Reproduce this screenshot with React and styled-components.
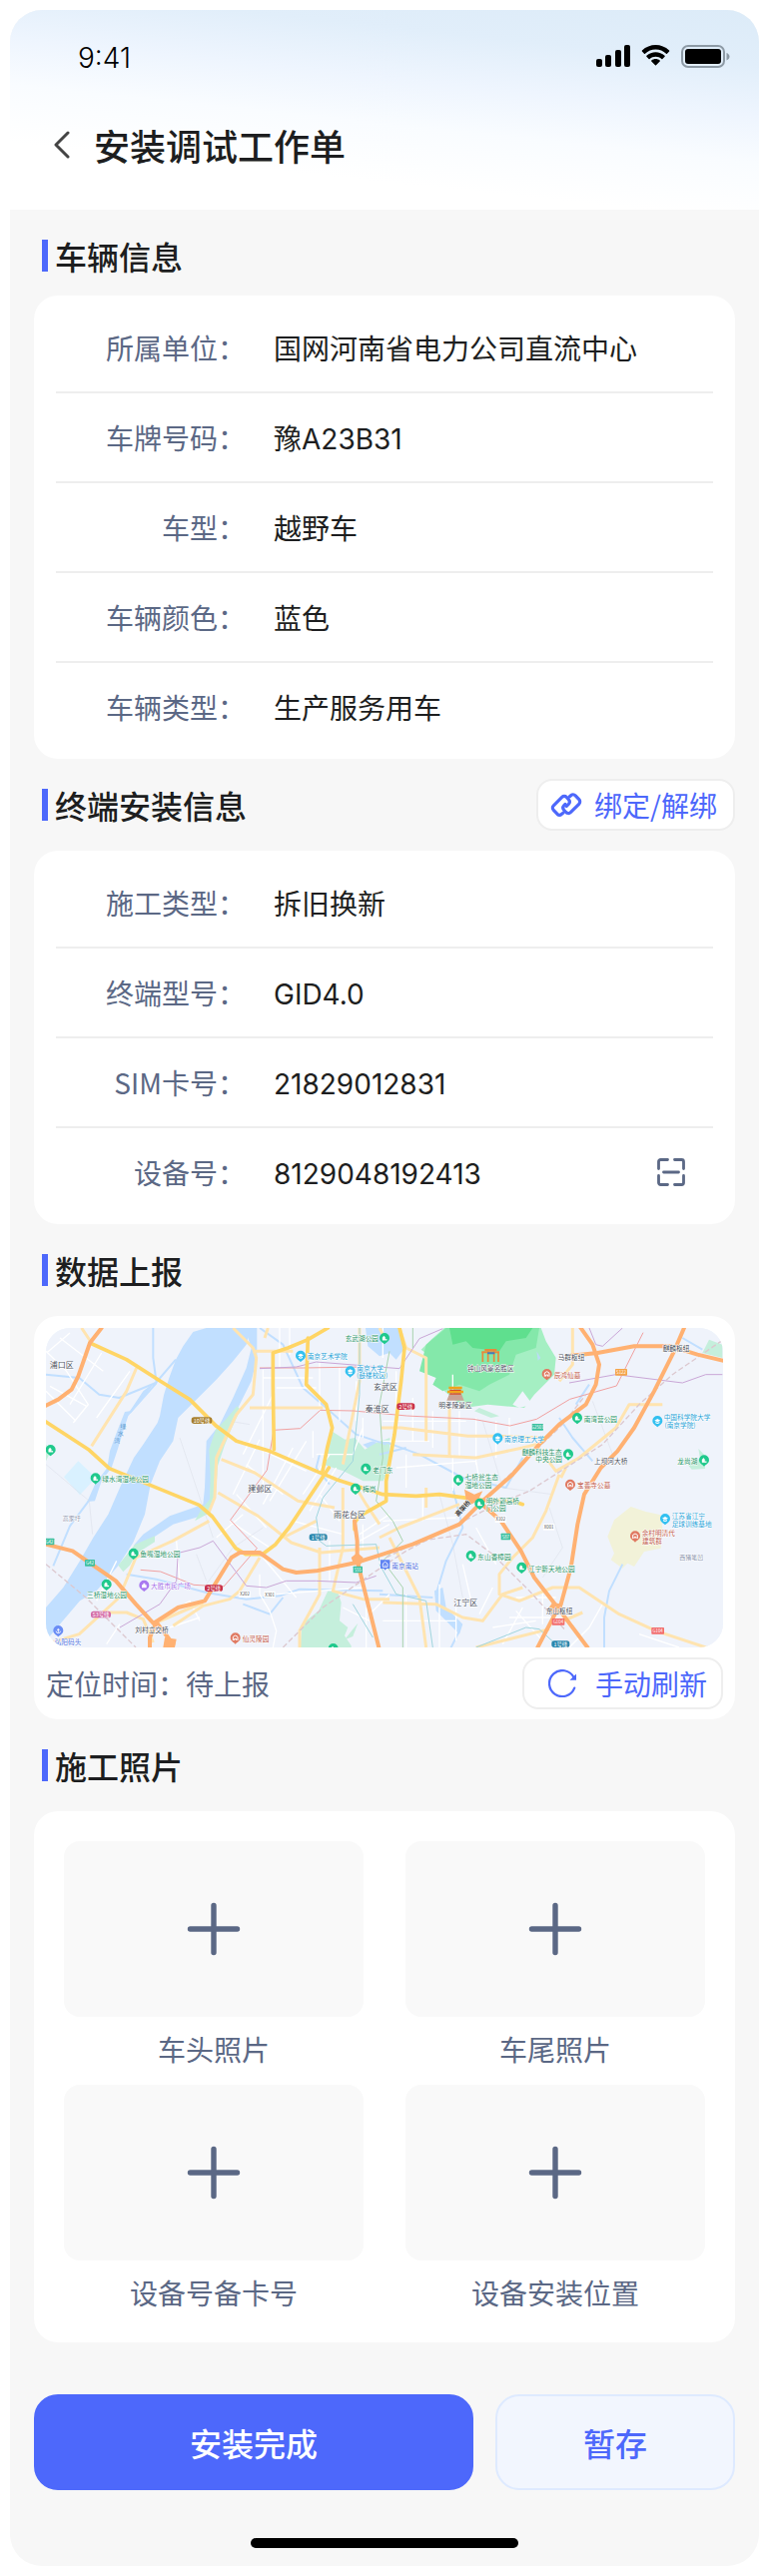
import React from "react";
import styled, { createGlobalStyle } from "styled-components";

const GlobalStyle = createGlobalStyle`
  * { box-sizing: border-box; }
  body {
    margin: 0;
    background: #fff;
    color: #1d1e20;
    font-family: "Noto Sans CJK SC", sans-serif;
    font-size: 28px;
    line-height: 40px;
  }
  h1, h2, dl, dt, dd, p { margin: 0; font-weight: 400; }
  button { font: inherit; color: inherit; padding: 0; border: 0; background: none; cursor: pointer; }
  svg { display: block; flex: none; }
`;

const Shell = styled.div`
  margin: 10px;
  border-radius: 32px;
  overflow: hidden;
  background: #f7f7f7;
`;

const Header = styled.header`
  height: 200px;
  background: linear-gradient(186deg, #dcebf8 0%, #e1eefa 20%, #eef5fe 38%, #f9fcff 55%, #fff 76%);
`;

const StatusBar = styled.div`
  display: flex;
  align-items: center;
  justify-content: space-between;
  height: 96px;
  padding: 0 29px 0 68px;
`;

const Clock = styled.time`
  font-family: Inter, sans-serif;
  font-size: 28px;
  font-weight: 300;
  color: #000;
`;

const StatusIcons = styled.div`
  display: flex;
  align-items: center;
  gap: 10px;
  padding-bottom: 4px;
`;

const NavBar = styled.nav`
  display: flex;
  align-items: center;
  gap: 24px;
  height: 78px;
  padding: 0 44px;
`;

const PageTitle = styled.h1`
  font-size: 36px;
  font-weight: 500;
  line-height: 48px;
`;

const Main = styled.main`
  padding: 0 24px;
`;

const SectionHead = styled.div`
  display: flex;
  align-items: center;
  justify-content: space-between;
  height: ${(p) => (p.$first ? "86px" : "92px")};
  padding-top: ${(p) => (p.$first ? "6px" : "0")};
`;

const SectionTitle = styled.h2`
  margin-left: 8px;
  padding-left: 7px;
  border-left: 6px solid #4d68fb;
  font-size: 32px;
  font-weight: 500;
  line-height: 32px;
`;

const Card = styled.div`
  border-radius: 24px;
  background: #fff;
  padding: ${(p) => p.$pad};
`;

const Row = styled.div`
  display: flex;
  align-items: center;
  height: 90px;
  border-bottom: 2px solid #eee;
  &:last-child { height: 88px; border-bottom: 0; }
`;

const RowLabel = styled.dt`
  width: 190px;
  margin-right: 28px;
  text-align: right;
  color: #5b6885;
`;

const RowValue = styled.dd`
  flex: 1;
`;

const ValueText = styled.span`
  font-family: Inter, "Noto Sans CJK SC", sans-serif;
  line-height: 1;
`;

const ScanButton = styled.button`
  margin-right: 28px;
  color: #5b6885;
`;

const PillButton = styled.button`
  display: flex;
  align-items: center;
  height: 52px;
  gap: ${(p) => p.$gap};
  padding: ${(p) => p.$pad};
  border: 2px solid #eee;
  border-radius: 16px;
  background: #fff;
  color: #4d68fb;
`;

const MapView = styled.svg`
  width: 100%;
  height: 320px;
  border-radius: 24px;
  background: #eff3fb;
`;

const MapFoot = styled.div`
  display: flex;
  align-items: center;
  justify-content: space-between;
  margin-top: 10px;
  color: #5b6885;
`;

const PhotoGrid = styled.div`
  display: grid;
  grid-template-columns: 1fr 1fr;
  column-gap: 42px;
  row-gap: 16px;
`;

const PhotoItem = styled.div`
  display: flex;
  flex-direction: column;
  gap: 12px;
  text-align: center;
  color: #5b6885;
`;

const PhotoAdd = styled.button`
  display: flex;
  align-items: center;
  justify-content: center;
  height: 176px;
  border-radius: 16px;
  background: #f9f9f9;
`;

const Actions = styled.footer`
  display: grid;
  grid-template-columns: 11fr 6fr;
  gap: 22px;
  padding: 52px 24px 48px;
`;

const ActionButton = styled.button`
  height: 96px;
  border-radius: 24px;
  border: 2px solid ${(p) => (p.$primary ? "#4d68fb" : "#deeaff")};
  background: ${(p) => (p.$primary ? "#4d68fb" : "#f2f6fe")};
  color: ${(p) => (p.$primary ? "#fff" : "#4d68fb")};
  font-size: 32px;
  font-weight: 500;
`;

const HomeIndicator = styled.div`
  width: 268px;
  height: 10px;
  margin: 0 auto 18px;
  border-radius: 5px;
  background: #000;
`;

/* ---------- icons ---------- */

const SignalIcon = () => (
  <svg width="34" height="22" viewBox="0 0 34 22" aria-hidden="true">
    <rect x="0" y="14" width="6" height="8" rx="2" />
    <rect x="9" y="10" width="6" height="12" rx="2" />
    <rect x="19" y="5" width="6" height="17" rx="2" />
    <rect x="28" y="0" width="6" height="22" rx="2" />
  </svg>
);

const WifiIcon = () => (
  <svg width="31" height="22" viewBox="0 0 31 22" aria-hidden="true">
    <path d="M15.5 4.5c4 0 7.700 1.500 10.500 4.200.3.300.7.300 1 0l2.100-2.200c.3-.3.300-.8 0-1.100C25.300 1.900 20.500 0 15.500 0S5.700 1.900 1.900 5.400c-.3.300-.3.800 0 1.100L4 8.700c.3.300.7.300 1 0 2.800-2.700 6.500-4.200 10.500-4.200z" />
    <path d="M15.500 11.700c2.200 0 4.300.8 5.900 2.300.3.300.7.300 1 0l2.200-2.200c.3-.3.300-.8 0-1.100-5.100-4.700-13.100-4.700-18.200 0-.3.300-.3.800 0 1.100L8.600 14c.3.300.7.300 1 0 1.600-1.500 3.700-2.300 5.900-2.300z" />
    <path d="M19.700 16.500c.3-.3.300-.8 0-1.100-2.400-2-6-2-8.400 0-.3.300-.3.800 0 1.100l3.700 3.800c.3.300.7.300 1 0z" />
  </svg>
);

const BatteryIcon = () => (
  <svg width="49" height="23" viewBox="0 0 49 23" aria-hidden="true">
    <rect x="1" y="1" width="42" height="21" rx="6" fill="none" stroke="#8d9aa5" strokeWidth="2" />
    <rect x="4" y="4" width="36" height="15" rx="3" />
    <path d="M45.500 8v7.500c1.700-.6 3-2 3-3.700s-1.300-3.200-3-3.800z" fill="#8d9aa5" />
  </svg>
);

const BackIcon = () => (
  <svg width="16" height="28" viewBox="0 0 16 28" fill="none" stroke="#444" strokeWidth="3" strokeLinecap="round" strokeLinejoin="round" aria-hidden="true">
    <path d="M14 2 2 14l12 12" />
  </svg>
);

const LinkIcon = () => (
  <svg width="32" height="24" viewBox="0 0 32 24" fill="none" stroke="currentColor" strokeWidth="3.200" strokeLinecap="round" strokeLinejoin="round" aria-hidden="true">
    <path d="M12.800 20.300 11.500 21.300c-1.300 1.200-3.300 1.100-4.600-.1l-3.600-3.800c-1.300-1.300-1.300-3.300 0-4.600l8.400-8.400c1.300-1.300 3.300-1.300 4.600 0l2 2.300c1.300 1.400 1.200 3.400 0 4.700l-2 2" />
    <path d="M19.400 3.800 20.600 2.700c1.300-1.200 3.300-1.200 4.600.1l3.600 3.900c1.200 1.300 1.200 3.300-.1 4.600l-8.400 8.300c-1.300 1.300-3.300 1.200-4.600-.1l-2-2.200c-1.200-1.400-1.200-3.400.1-4.700l1.200-1.200" />
  </svg>
);

const ScanIcon = () => (
  <svg width="28" height="28" viewBox="0 0 28 28" fill="none" stroke="currentColor" strokeWidth="2.800" strokeLinecap="round" strokeLinejoin="round" aria-hidden="true">
    <path d="M1.500 10.500v-7a2 2 0 0 1 2-2h7M17.500 1.500h7a2 2 0 0 1 2 2v7M26.500 17.500v7a2 2 0 0 1-2 2h-7M10.500 26.500h-7a2 2 0 0 1-2-2v-7M6.500 14h15" />
  </svg>
);

const RefreshIcon = () => (
  <svg width="29" height="28" viewBox="0 0 29 28" fill="none" aria-hidden="true">
    <path d="M26.200 18.600A13 13 0 1 1 25.500 8" stroke="currentColor" strokeWidth="2.200" strokeLinecap="round" />
    <path d="M28 4.500v6.200h-6.500z" fill="currentColor" />
  </svg>
);

const PlusIcon = () => (
  <svg width="54" height="54" viewBox="0 0 54 54" stroke="#5b6885" strokeWidth="5.400" strokeLinecap="round" aria-hidden="true">
    <path d="M27 3.500v47M3.500 27h47" />
  </svg>
);

/* ---------- map ---------- */

const EAST = 1050;

const minorRoads = [
  "M48 130 110 190 175 290 130 345M90 90l130 100M60 235l110 60M120 75l-70 60M215 135 120 290M300 190 200 330M48 250l90 90",
  "M700 185v350M735 250 640 440M650 470 760 560M640 400l190 90M690 395 610 560M620 560l90 100M830 400l-110 180M790 420 700 590M850 370v80M740 240h120M700 210h150M750 60v120M780 60v80M870 160v150M930 180v160M980 220v120M600 640l120 80M560 690l80-70M740 300h90",
  "M860 440h110l30-80M1000 330v60M820 560l80-120M790 640l150 40M900 700v120M990 700l90-50M1000 650v80M870 560l60 80M920 480l-80 130M1080 620l-90 60",
  "M690 800v60l30 50 20 60-10 50M740 860l260-20M440 700l10 120M260 760l-60 120M380 940l100-60 30 60M420 960l90-30M230 1010l40-60M700 750l100 120M1010 900v120M940 900l80 40M1080 860l-60 60",
  "M1060 60v90M1100 190v120M1060 340h250M1150 270v130M1210 310v110M1290 310v140M1340 330v140M1060 400h140M1100 480l240-20M1400 340v110M1130 440v100M1340 460l10 60M1440 330v80M1270 200v90",
  "M1060 640l220-10M1180 560v80M1270 440v110M1300 770l30 130M1340 660l60 110M1390 840l-40 80M1460 910l80 90M1480 900l-60 110M1540 850v100M1460 870h120M1440 930h170M1720 890l-40 70-60 60M1580 900l50 50M1830 980l120 40M1130 860v160M1230 830v190M1280 900v100M1060 940h220M1390 960l130-20",
];

const lightRoads = [
  "M155 60l30 45M320 180 290 250 185 415M48 1010l100-30 120-110 50-120 110-50 110-60",
  "M610 60l60 60 10 30-10 110-50 60-60 130-5 120-20 50",
  "M670 130h120M660 300h220M575 455l100 40 130 85 110 20M565 555l120 70 100 80 90 30 175-15",
  "M715 60l-10 30M990 60v160l-50 250M940 540v180l-30 130 90 25h80M870 720v140l-60 110v50M690 750l-60 100-30 25-80 20-90 60M380 945l140-60M230 915h60l50 20 30 70",
  "M1110 60l20 60 60 30v250M1055 360h60l200 25 90 0 150 5M1260 300v150M1150 440l190 10 140-30 40-10 60 80 70-40 110-90 40-70h100",
  "M1050 690 1110 660 1290 590M1590 500l-40 110-40 80-60 60-40 50v60l60 20 100-40h80l120 80 110 50 150 50 120 20M1480 840l-60 20-60 80-60-10-80-40-160-5M1080 690l90 180 20 150M1610 480l-15 30M1630 60v110l-40 50M1340 1020l220-55",
  "M1590 945l70-30M1050 60l10 20M980 540l30 50 40 60M760 690l100-50M1190 540v60",
];

const yellowRoads = [
  "M180 105l110 50 110 70 80 50 30 30 50 50 60 45 100 30 140 60 60 25 140 45 100 5 70-5 150 20h70l30 10",
  "M48 342l130 85 60 55 110 45 160 65 40 35 70 95 30 18h50l40-30 40-50 120-180",
  "M895 60l-60 35-60 25-45 15v100l3 190",
  "M835 90l-5 140 60 60 18 70-15 60-15 75",
  "M1110 60l15 60-10 100-20 160-25 140v60l-80 45-15 20v20",
];

const orangeRoads = [
  "M215 60l-35 45-35 100-20 40-40 30-37 18",
  "M48 710l80 20 50 35 80 55 60 70 55 60M375 945l70-45 80-20 80-130 25-15h60l70 50 40 10 60-5 120-25 80-25 90-30 140-60 70-70 90-80 80-90 60-60 80-60 30-60 10-60-20-60-60-85",
  "M975 640l8 60v60l30 120 35 140M360 1020v-30l20-45 50 65",
  "M1625 143l80-8 110-20h110l80 25 85 20M1965 60l-30 70-60 120-60 110-50 70-50 50-50 80-20 90-20 130-30 110",
  "M1335 570l80 70 60 90 40 80 70 90 90 120M1585 905l-60 115",
];

const blueStreams = [
  "M370 60v90l10 75M48 200l100 10 60 50 60 10 110-45 60-70M380 225l-80 90M180 575l-60 80-50 120",
  "M690 60l70 50 60 130 70 60 90 80 90 30",
  "M290 800l90 15 150 40 120 20 100-10 60-20 250 5M640 890l80 30 40-50",
  "M1270 540l30 120-50 100-30 100 20 60 50 50-30 60M1050 860l160 10M1480 450l-50 90-130-30-130-70-110-40M1590 330l40 60 60 70M1680 230l-40 60M1780 770l-40 80-15 80v90M1960 90l60 35",
  "M870 440l-10 40 40 50M1050 440l80-20",
];

const rails = [
  "M760 1020 880 900 1040 790 1130 730 1400 590 1500 550 1720 410 1830 290 1930 200 2076 100",
  "M1070 750l100-50 140-20 80 60 110 110 110 120",
  "M48 770l120 100 150 150",
  "M1400 540l200-190 70-90",
];

const metroLines = [
  ["#f0a0a0", "M690 180h130l180-3M332 787l60 5 100 40 90 5 100-115-80-85 110-150 20-120 80-5 60-55 100 2 160 15 200 10 110 20 80-20 100-60 140-40 80-160"],
  ["#c9a6d6", "M450 735l60-15 40-20 100 135 60 5 60-20h90l120 5 60-20M270 960l120-70 50-70 5-90M690 182l110-5 60-15 250 20 60-90 70-30M1680 60l20 50 20 5 60-55M1620 225l140-25 200 25 70-25h50"],
  ["#9fd5dd", "M990 60v200l-20 200-90 110-20 60 10 70 20 15 150-5 10 50M970 890l60 100M1050 770l50 90 90 20 20 140M1340 1020l150-60 40 5 60 55"],
  ["#a8d3ae", "M1080 130l-30 160 10 160-20 130 50 60 30 60-60 60 60 80v180M1150 60v60"],
];

const pins = [
  ["green", 62, 428], ["green", 197, 513], ["green", 311, 739], ["green", 230, 832], ["green", 978, 544],
  ["green", 1009, 484], ["green", 1065, 92], ["green", 911, 1025], ["cyan", 813, 145], ["cyan", 962, 192],
  ["violet", 343, 835], ["indigo", 85, 971], ["clay", 617, 993], ["clay", EAST + 503, 200], ["clay", EAST + 573, 532],
  ["clay", EAST + 768, 687], ["green", EAST + 594, 332], ["green", EAST + 567, 441], ["green", EAST + 975, 459],
  ["green", EAST + 237, 518], ["green", EAST + 301, 589], ["green", EAST + 275, 746], ["green", EAST + 427, 781],
  ["cyan", EAST + 355, 393], ["cyan", EAST + 835, 341], ["cyan", EAST + 858, 635],
];

const pinColors = { green: "#20c98c", cyan: "#33c0f0", violet: "#a878f0", indigo: "#6a8df5", clay: "#e07a62" };

const labels = [
  ["浦口区", 95, 181, "district"], ["玄武区", 1068, 247, "district"], ["秦淮区", 1043, 311, "district"],
  ["建邺区", 691, 552, "district"], ["雨花台区", 960, 630, "district"], ["江宁区", EAST + 259, 893, "district"],
  ["玄武湖公园", 997, 100, "green"], ["绿水湾湿地公园", 287, 522, "green"], ["鱼嘴湿地公园", 391, 747, "green"],
  ["三桥湿地公园", 231, 871, "green"], ["老门东", 1060, 494, "green"], ["梅岗", 1019, 552, "green"],
  ["南京艺术学院", 893, 153, "cyan"], ["南京大学", 1022, 188, "cyan"], ["(鼓楼校区)", 1028, 211, "cyan"],
  ["大胜市民广场", 423, 844, "violet"], ["弘阳码头", 114, 1010, "indigo"], ["仙灵陵园", 678, 1003, "clay"],
  ["刘村立交桥", 366, 975, "dark"], ["高家圩", 125, 640, "muted"],
  ["钟山风景名胜区", EAST + 334, 190, "dark"], ["明孝陵景区", EAST + 228, 301, "dark"],
  ["马群枢纽", EAST + 576, 155, "dark"], ["麒麟枢纽", EAST + 891, 130, "dark"], ["上坝河大桥", EAST + 695, 467, "dark"],
  ["东山枢纽", EAST + 540, 917, "dark"], ["辰鸿仙墓", EAST + 564, 209, "clay"], ["宝善寺公墓", EAST + 644, 541, "clay"],
  ["余村明清代", EAST + 838, 685, "clay"], ["建筑群", EAST + 819, 708, "clay"],
  ["南湾营公园", EAST + 664, 341, "green"], ["麒麟科技生态", EAST + 488, 440, "green"], ["中央公园", EAST + 509, 463, "green"],
  ["龙尚湖", EAST + 925, 468, "green"], ["七桥瓮生态", EAST + 307, 516, "green"], ["湿地公园", EAST + 297, 539, "green"],
  ["明外郭高桥", EAST + 370, 587, "green"], ["门公园", EAST + 350, 610, "green"], ["东山香樟园", EAST + 345, 755, "green"],
  ["江宁新天地公园", EAST + 517, 791, "green"], ["南京理工大学", EAST + 435, 402, "cyan"],
  ["中国科学院大学", EAST + 924, 337, "cyan"], ["(南京学院)", EAST + 903, 361, "cyan"],
  ["江苏省江宁", EAST + 928, 633, "cyan"], ["足球训练基地", EAST + 938, 656, "cyan"],
  ["南京南站", EAST + 77, 782, "indigo"], ["西猪笔凹", EAST + 937, 757, "muted"],
];

const labelColors = {
  district: "#4a4f5c", dark: "#4a4f5c", muted: "#8a93ad", green: "#1f9468", cyan: "#1e9fd8",
  violet: "#a56ee8", indigo: "#4d6fe0", clay: "#c2604f",
};

const badges = [
  ["10号线", 516, 338, 62, "#a8802f"], ["2号线", 552, 842, 54, "#c9304a"], ["1号线", 866, 689, 54, "#2a87ad"],
  ["S3号线", 213, 921, 60, "#d36aa6"], ["2号线", EAST + 79, 296, 54, "#c9304a"], ["1号线", EAST + 544, 1010, 54, "#2a87ad"],
  ["G42", 180, 766, 30, "#3cc0a0"], ["G42", 58, 702, 30, "#3cc0a0"], ["S55", 985, 786, 28, "#3cc0a0"],
  ["G2501", EAST + 475, 358, 34, "#3cc0a0"], ["S87", EAST + 379, 687, 28, "#3cc0a0"], ["S122", EAST + 726, 193, 36, "#f5a54a"],
  ["G104", EAST + 537, 943, 38, "#f26d6d"], ["G104", EAST + 836, 970, 38, "#f26d6d"],
];

const roadTags = [["X202", 645, 860], ["X301", 720, 861], ["X102", EAST + 364, 635], ["X001", EAST + 509, 658]];

const Pin = ({ kind, x, y }) => (
  <g transform={`translate(${x} ${y})`}>
    <path d="M0 17C-5 12-15 8-15-2a15 15 0 0 1 30 0C15 8 5 12 0 17z" fill={pinColors[kind]} />
    {kind === "green" && <path d="M-6 5V-3l4-5 4 4v6h5v3zM-2-1v5" fill="#fff" stroke="#fff" />}
    {kind === "cyan" && <path d="M-9-3 0-8l9 5-9 5zM-6 1v4q6 4 12 0V1L0 4z" fill="#fff" />}
    {kind === "violet" && <path d="M-7 6V-3h4v-5h6v5h4v9z" fill="#fff" />}
    {kind === "indigo" && <path d="M0-8V5M-4-4h8M-7 0q1 6 7 6t7-6" fill="none" stroke="#fff" strokeWidth="2.500" />}
    {kind === "clay" && <path d="M-7 6V-5l7-4 7 4V6M-3 6v-5h6v5" fill="none" stroke="#fff" strokeWidth="3" />}
  </g>
);

const LocationMap = () => (
  <MapView viewBox="48 60 2034 960" preserveAspectRatio="xMidYMid slice" role="img" aria-label="定位地图">
    <rect x="-500" y="0" width="3200" height="1100" fill="#eff3fb" />

    {/* water */}
    <g fill="#c1dfff">
      <path d="M530 60 490 72 460 115 438 155 418 210 402 262 390 325 383 345 340 410 312 450 270 540 235 620 190 690 150 760 100 840 48 900V1000L90 950 150 880 200 850 265 775 310 705 345 620 362 530 390 460 430 400 445 330 500 275 560 215 610 160 650 110 662 60H608L590 78 562 145 570 152 585 138 612 100 640 76 630 60z" />
      <path d="M645 60h37v90l-17 70-40 80-25 60-25 40-15 40-15 60-5 90-10 30-100 30-60 40-60 25 30-35 80-55 100-35 5-50 5-140 40-50 40-80 40-90 15-60z" />
      <path d="M375 222 340 250 300 310 285 312 262 370 240 430 232 480 195 530 172 582 195 580 215 520 245 480 265 420 280 370 295 325 345 265z" />
      <path d="M1008 60H1110l20 55-30 40-20-20-30 10-35-30z" />
      <path d="M1000 410l30-10 50 20-30 30z" />
      <path d="M1215 850l25-10 10 60 50 50-10 30-50-50-20-20z" />
    </g>
    <path d="M102 508 145 460 198 510 150 562z" fill="#d9f1ff" />

    {/* parks */}
    <g fill="#c5efdc">
      <path d="M622 295l10 10-28 60-20 50-20 60-6 90-18 50-45 25 20-35 25-30 2-70-4-80 20-60 30-30z" />
      <path d="M375 685v18l-55 35-20 35-20 20-15-20 50-62z" />
      <path d="M906 370l40 25 30-5 30 35 35-20 40-15v90l-20 40h-60l-60-30-60-20z" />
      <path d="M895 850l30 5 10 30-5 55 25 20-10 25 20 30v5H812l5-70 50-40z" />
      <path d="M48 410l15 20-15 30z" />
      <path d="M2008 423l20 20v40l-40 2-15-18 40-15z" />
      <path d="M2040 95l40 15v40l-60-15z" />
      <path d="M1350 300l60 25-25 5-50-20z" />
      <path d="M970 965l15-18-15 40-25 10z" />
    </g>
    <path d="M1805 597l45 15 45 10 5 40-5 60-50 10-30 45-20-10-15 15-35-25 10-20-20-50 20-50z" fill="#f2f2d8" />

    {/* Purple Mountain */}
    <path d="M1245 60H1535l15 40 30 50-5 50-60 60-30 40-110-10-70 10-60-50-20-40-25-10-5-60-20-15 30-30z" fill="#a5efc3" />
    <path d="M1250 60H1530l-10 60-60 20-20 60-60 30-30 20-60-20-50 20-30-20 10-20-50-20 20-80z" fill="#84e8aa" />
    <path d="M1260 60H1510l-20 30-60 10-20 30-80-10-20-20-40 10z" fill="#5fdf8e" />
    <path d="M1480 250l30 40-40 10-20-10z" fill="#eff3fb" />
    <path d="M1522 130l12 20-8 8z" fill="#b9dcf5" />

    <g fill="none" stroke="#c1dfff" strokeWidth="6" strokeLinejoin="round">
      {blueStreams.map((d) => <path key={d} d={d} />)}
    </g>
    <g fill="none" stroke="#fff" strokeWidth="4">
      {minorRoads.map((d) => <path key={d} d={d} />)}
    </g>
    <g fill="none" stroke="#d9dde6" strokeWidth="1.500">
      <path d="M48 470l130 110 10 100M450 390l100 300M530 830l80-110 90-60M600 340l60 10M1230 560l40 150 30 160M1360 340l60 200 150 20M1560 600l40 120-60 90M1690 280l60 160M500 740l30 80" />
    </g>
    <g fill="none" stroke="#ffe4b0" strokeWidth="9" strokeLinejoin="round">
      {lightRoads.map((d) => <path key={d} d={d} />)}
    </g>
    {metroLines.map(([color, d]) => <path key={d} d={d} fill="none" stroke={color} strokeWidth="3" />)}
    <g fill="none" stroke="#dcc8cf" strokeWidth="4">
      {rails.map((d) => <path key={d} d={d} strokeDasharray="16 8" />)}
    </g>
    <g fill="none" stroke="#ffd565" strokeWidth="11" strokeLinejoin="round" strokeLinecap="round">
      {yellowRoads.map((d) => <path key={d} d={d} />)}
    </g>
    <g fill="none" stroke="#ffb172" strokeWidth="12" strokeLinejoin="round" strokeLinecap="round">
      {orangeRoads.map((d) => <path key={d} d={d} />)}
    </g>
    <path d="M1305 545l30 15 25-10-15 30-20 10-15-15zM965 750l18-15 18 15-8 22h-20zM1570 885l30 5-5 30h-25l-15-15zM405 990l35 5-5 25h-35z" fill="#ffb172" />

    {/* scenic gate and pavilion */}
    <g>
      <path d="M1360 132v30M1376 126v36M1394 126v36M1407 132v30" stroke="#e8893a" strokeWidth="5" />
      <path d="M1357 133h53M1366 126h36" stroke="#e8893a" strokeWidth="6" />
      <path d="M1374 136h22" stroke="#3f7fc0" strokeWidth="6" />
      <path d="M1252 278l8-20h36l8 20z" fill="#c9a395" />
      <path d="M1258 240h40M1254 252h48" stroke="#f0a41c" strokeWidth="7" />
      <path d="M1261 247h34M1261 258h34" stroke="#d9502a" strokeWidth="4" />
    </g>

    {pins.map(([kind, x, y]) => <Pin key={`${x}-${y}`} kind={kind} x={x} y={y} />)}
    <g transform={`translate(${EAST + 17} 772)`}>
      <path d="M-14-15h28v26H4L0 16-4 11h-10z" fill="#5f83f2" />
      <path d="M-7 6V-4l7-5 7 5V6zM-2 2h4" fill="none" stroke="#fff" strokeWidth="2.500" />
    </g>

    <g textAnchor="middle" stroke="#fff" strokeWidth="3" strokeLinejoin="round" paintOrder="stroke">
      {labels.map(([text, x, y, kind]) => (
        <text key={text} x={x} y={y} fontSize={kind === "district" ? 24 : kind === "muted" ? 18 : 20} fill={labelColors[kind]}>{text}</text>
      ))}
      <text fontSize="18" fill="#5d9bd0" stroke="none">
        <tspan x="280" y="362">绿</tspan>
        <tspan x="272" y="384">水</tspan>
        <tspan x="262" y="406">湾</tspan>
      </text>
      <text x={EAST + 250} y="609" fontSize="19" fontWeight="700" fill="#3a3a3a" transform={`rotate(-48 ${EAST + 250} 602)`}>高架桥</text>
    </g>

    {badges.map(([text, x, y, w, fill]) => (
      <g key={`${text}-${x}`}>
        <rect x={x - w / 2} y={y - 10} width={w} height="20" rx={w > 50 ? 8 : 2} fill={fill} />
        <text x={x} y={y + 6} fontSize={w > 50 ? 16 : 13} textAnchor="middle" fill="#fff">{text}</text>
      </g>
    ))}
    {roadTags.map(([text, x, y]) => (
      <g key={text}>
        <rect x={x - 17} y={y - 10} width="34" height="20" fill="#fff" />
        <text x={x} y={y + 5} fontSize="13" textAnchor="middle" fill="#555">{text}</text>
      </g>
    ))}
  </MapView>
);

/* ---------- page ---------- */

const vehicleRows = [
  ["所属单位：", "国网河南省电力公司直流中心"],
  ["车牌号码：", "豫A23B31"],
  ["车型：", "越野车"],
  ["车辆颜色：", "蓝色"],
  ["车辆类型：", "生产服务用车"],
];

const terminalRows = [
  ["施工类型：", "拆旧换新"],
  ["终端型号：", "GID4.0"],
  ["SIM卡号：", "21829012831"],
  ["设备号：", "8129048192413", true],
];

const photos = ["车头照片", "车尾照片", "设备号备卡号", "设备安装位置"];

const InfoCard = ({ rows }) => (
  <Card as="dl" $pad="8px 22px">
    {rows.map(([label, value, scan]) => (
      <Row key={label}>
        <RowLabel>{label}</RowLabel>
        <RowValue><ValueText>{value}</ValueText></RowValue>
        {scan && <ScanButton type="button" aria-label="扫码"><ScanIcon /></ScanButton>}
      </Row>
    ))}
  </Card>
);

export default function App() {
  return (
    <>
      <GlobalStyle />
      <Shell lang="zh-CN">
        <Header>
          <StatusBar>
            <Clock>9:41</Clock>
            <StatusIcons>
              <SignalIcon />
              <WifiIcon />
              <BatteryIcon />
            </StatusIcons>
          </StatusBar>
          <NavBar>
            <button type="button" aria-label="返回"><BackIcon /></button>
            <PageTitle>安装调试工作单</PageTitle>
          </NavBar>
        </Header>

        <Main>
          <section>
            <SectionHead $first><SectionTitle>车辆信息</SectionTitle></SectionHead>
            <InfoCard rows={vehicleRows} />
          </section>

          <section>
            <SectionHead>
              <SectionTitle>终端安装信息</SectionTitle>
              <PillButton type="button" $gap="12px" $pad="0 16px 0 12px"><LinkIcon />绑定/解绑</PillButton>
            </SectionHead>
            <InfoCard rows={terminalRows} />
          </section>

          <section>
            <SectionHead><SectionTitle>数据上报</SectionTitle></SectionHead>
            <Card $pad="12px 12px 10px">
              <LocationMap />
              <MapFoot>
                <p>定位时间：待上报</p>
                <PillButton type="button" $gap="18px" $pad="0 14px 0 24px"><RefreshIcon />手动刷新</PillButton>
              </MapFoot>
            </Card>
          </section>

          <section>
            <SectionHead><SectionTitle>施工照片</SectionTitle></SectionHead>
            <Card $pad="30px">
              <PhotoGrid>
                {photos.map((name, i) => (
                  <PhotoItem key={name}>
                    <PhotoAdd type="button" aria-labelledby={`photo-${i}`}><PlusIcon /></PhotoAdd>
                    <p id={`photo-${i}`}>{name}</p>
                  </PhotoItem>
                ))}
              </PhotoGrid>
            </Card>
          </section>
        </Main>

        <Actions>
          <ActionButton type="button" $primary>安装完成</ActionButton>
          <ActionButton type="button">暂存</ActionButton>
        </Actions>
        <HomeIndicator />
      </Shell>
    </>
  );
}
